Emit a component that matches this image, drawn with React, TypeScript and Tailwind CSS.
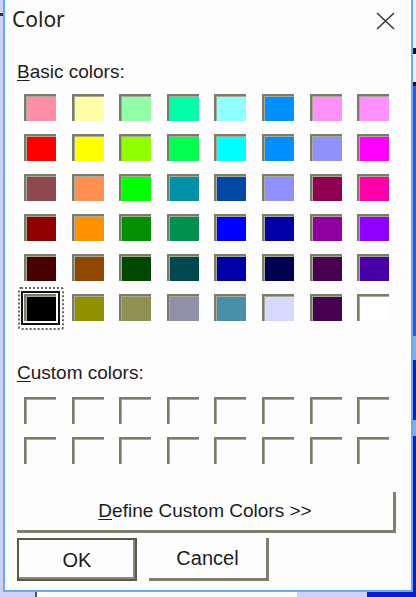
import React from 'react';

const basic: string[][] = [
  ['#ff8fa8', '#ffffa8', '#90ffa8', '#00ffa8', '#90ffff', '#0090ff', '#ff90f8', '#ff90ff'],
  ['#ff0000', '#ffff00', '#90ff00', '#00ff50', '#00ffff', '#0090ff', '#9090ff', '#ff00ff'],
  ['#904850', '#ff9050', '#00ff00', '#0090a8', '#0048a8', '#9090ff', '#900050', '#ff00a8'],
  ['#900000', '#ff9000', '#009000', '#009050', '#0000ff', '#0000a8', '#9000a0', '#9000ff'],
  ['#480000', '#904800', '#004800', '#004850', '#0000a8', '#000050', '#480050', '#4800a8'],
  ['#000000', '#909000', '#909050', '#9090a8', '#4890a8', '#d8d8ff', '#480050', '#ffffff'],
];

const Swatch: React.FC<{ color?: string; selected?: boolean }> = ({ color, selected }) => (
  <div className="relative w-[32px] h-[27px]">
    <div
      className="w-full h-full border-t-[2px] border-l-[2px] border-[#7b7b6c] shadow-[inset_1px_1px_0_#a9a99a]"
      style={{ backgroundColor: color ?? '#fdfdfd' }}
    />
    {selected && (
      <>
        <div className="absolute -left-[3px] -top-[3px] -right-[4px] -bottom-[4px] border-2 border-[#111] shadow-[inset_0_0_0_1px_#fff]" />
        <div className="absolute -left-[6px] -top-[7px] -right-[8px] -bottom-[9px] border-2 border-dotted border-[#666] rounded-[3px]" />
      </>
    )}
  </div>
);

const App: React.FC = () => {
  const label = "text-[19px] leading-[19px] text-[#1c1c1c] pl-[12px]";
  return (
    <div className="w-[416px] h-[597px] bg-[#cfcff9] flex flex-col overflow-hidden font-['Liberation_Sans',Arial,sans-serif]">
      <div className="flex h-[592px]">
        <div className="w-[3px] flex flex-col">
          <div className="h-[13px]" />
          <div className="h-[3px] bg-[#333]" />
        </div>

        <div className="w-[410px] h-[592px] flex flex-col bg-[#fdfdfd] border-l-2 border-r-2 border-b-2 border-[#6aaaf2]">
          <div className="h-[62px] flex justify-between items-start pl-[7px] pr-[16px] pt-[9px]">
            <span className="font-['Noto_Sans',sans-serif] text-[21px] leading-[21px] text-[#222]">Color</span>
            <svg className="mt-[3px]" width="19" height="18" viewBox="0 0 19 18">
              <path d="M1 1 L18 17 M18 1 L1 17" stroke="#3a3a3a" strokeWidth="1.6" fill="none" />
            </svg>
          </div>

          <div className={label}>
            <span className="underline underline-offset-2">B</span>asic colors:
          </div>

          <div className="ml-[19px] mt-[13px] grid grid-cols-[repeat(8,32px)] gap-x-[15.6px] gap-y-[13px]">
            {basic.map((row, r) =>
              row.map((c, i) => <Swatch key={`b-${r}-${i}`} color={c} selected={r === 5 && i === 0} />)
            )}
          </div>

          <div className={`${label} mt-[42px]`}>
            <span className="underline underline-offset-2">C</span>ustom colors:
          </div>

          <div className="ml-[19px] mt-[15px] grid grid-cols-[repeat(8,32px)] gap-x-[15.6px] gap-y-[13px]">
            {Array.from({ length: 16 }).map((_, i) => (
              <Swatch key={`c-${i}`} />
            ))}
          </div>

          <button className="ml-[12px] mt-[28px] w-[379px] h-[41px] flex items-center justify-center border-r-[3px] border-b-[3px] border-[#7f7f70] text-[19px] text-[#1c1c1c]">
            <span>
              <span className="underline underline-offset-2">D</span>efine Custom Colors &gt;&gt;
            </span>
          </button>

          <div className="ml-[12px] mt-[5px] flex gap-[12px]">
            <button className="w-[120px] h-[43px] flex items-center justify-center border-2 border-[#5a5a4a] shadow-[inset_-2px_-2px_0_#8a8a7a] text-[20px] text-[#1c1c1c]">
              OK
            </button>
            <button className="w-[120px] h-[43px] flex items-center justify-center border-r-[3px] border-b-[3px] border-[#7f7f70] text-[20px] text-[#1c1c1c]">
              Cancel
            </button>
          </div>
        </div>

        <div className="w-[3px] flex flex-col bg-[#0a1ec8]">
          <div className="h-[48px] bg-[#e8f0fc]" />
          <div className="h-[6px] bg-[#111]" />
          <div className="h-[28px] bg-[#e8f0fc]" />
          <div className="h-[4px] bg-[#111]" />
          <div className="h-[250px] bg-[#2a5ae0]" />
          <div className="h-[24px] bg-[#7ab0f0]" />
          <div className="h-[60px]" />
          <div className="h-[16px] bg-[#7ab0f0]" />
        </div>
      </div>

      <div className="flex h-[5px]">
        <div className="w-[35px]" />
        <div className="w-[2px] bg-[#555]" />
        <div className="w-[260px] bg-[#fafafa]" />
        <div className="w-[70px]" />
        <div className="flex-1 bg-[#0a1ec8]" />
      </div>
    </div>
  );
};

export default App;
